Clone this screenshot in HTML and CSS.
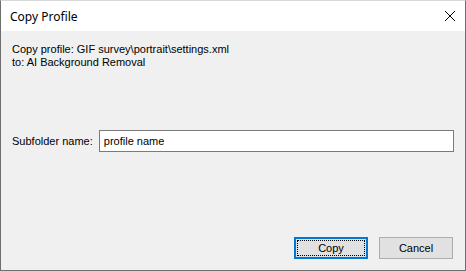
FILE: index.html
```html
<!DOCTYPE html>
<html lang="en">
<head>
  <meta charset="UTF-8">
  <title>Copy Profile</title>
  <link rel="stylesheet" href="styles.css">
</head>
<body>
  <div class="ventana">
    <div class="titulo">
      <span>Copy Profile</span>
      <svg class="cerrar" width="12" height="12" viewBox="0 0 12 12">
        <path d="M1 1 L11 11 M11 1 L1 11" stroke="#000" stroke-width="1" fill="none"/>
      </svg>
    </div>

    <div class="contenido">
      <div class="info">
        <div>Copy profile: GIF survey\portrait\settings.xml</div>
        <div>to: AI Background Removal</div>
      </div>

      <div class="campo">
        <label for="subcarpeta">Subfolder name:</label>
        <input type="text" id="subcarpeta" value="profile name">
      </div>

      <div class="botones">
        <button class="boton principal">Copy</button>
        <button class="boton">Cancel</button>
      </div>
    </div>
  </div>
</body>
</html>
```

FILE: styles.css
```css
body {
  margin: 0;
  padding: 0;
  background: #f0f0f0;
}

.ventana {
  width: 466px;
  height: 271px;
  box-sizing: border-box;
  border: 1px solid #6d6d6d;
  border-top-color: #d8d8d8;
  background: #f0f0f0;
  display: flex;
  flex-direction: column;
  font-family: "Liberation Sans", Arial, sans-serif;
  font-size: 11px;
  color: #000;
}

.titulo {
  height: 30px;
  background: #fff;
  display: flex;
  align-items: center;
  justify-content: space-between;
  padding: 0 9px 0 9px;
  font-family: "Noto Sans", "Open Sans", sans-serif;
  font-size: 12px;
}

.cerrar {
  margin-right: 0;
}

.contenido {
  flex: 1;
  display: flex;
  flex-direction: column;
  padding: 12px 11px 11px 11px;
}

.info {
  line-height: 13px;
}

.campo {
  display: flex;
  align-items: center;
  margin-top: 61px;
}

.campo label {
  width: 87px;
}

.campo input {
  width: 356px;
  height: 22px;
  box-sizing: border-box;
  border: 1px solid #7a7a7a;
  background: #fff;
  font-family: "Liberation Sans", Arial, sans-serif;
  font-size: 11px;
  padding: 0 4px;
  margin: 0;
  outline: none;
}

.botones {
  margin-top: auto;
  display: flex;
  justify-content: flex-end;
  gap: 11px;
  padding-right: 1px;
}

.boton {
  width: 74px;
  height: 22px;
  box-sizing: border-box;
  border: 1px solid #adadad;
  background: #e1e1e1;
  font-family: "Liberation Sans", Arial, sans-serif;
  font-size: 11px;
  color: #000;
  padding: 0;
  margin: 0;
}

.principal {
  border: 2px solid #0078d7;
  outline: 1px dotted #000;
  outline-offset: -4px;
}
```
